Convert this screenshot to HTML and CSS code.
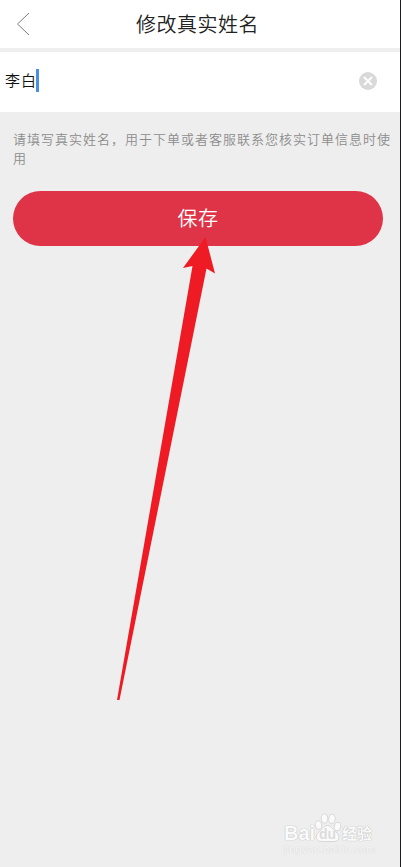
FILE: index.html
```
<!DOCTYPE html>
<html lang="zh-CN">
<head>
  <meta charset="UTF-8" />
  <meta name="viewport" content="width=device-width, initial-scale=1.0"/>
  <title>修改真实姓名</title>
  <link rel="stylesheet" href="styles.css">
</head>
<body>
  <div class="page">
    <header class="header">
      <a href="#" class="back" aria-label="返回">
        <svg width="14" height="24" viewBox="0 0 14 24">
          <path d="M13 1 L1.5 12 L13 23" fill="none" stroke="#7d7d7d" stroke-width="1"/>
        </svg>
      </a>
      <h1 class="title">修改真实姓名</h1>
    </header>

    <div class="field">
      <span class="name">李白</span>
      <span class="caret"></span>
      <svg class="clear" width="18" height="18" viewBox="0 0 18 18">
        <circle cx="9" cy="9" r="9" fill="#d9d9d9"/>
        <path d="M5 5 L13 13 M13 5 L5 13" stroke="#fff" stroke-width="2"/>
      </svg>
    </div>

    <p class="hint">请填写真实姓名，用于下单或者客服联系您核实订单信息时使用</p>

    <button class="save">保存</button>
  </div>

  <!-- Pointer arrow over the button -->
  <svg class="arrow" width="98" height="464" viewBox="0 0 98 464">
    <path d="M88.5 0 L98 36.5 L89.5 31.5 L2.5 463 L0 463 L75.5 29 L66 31 Z" fill="#ef1b24"/>
  </svg>

  <!-- Watermark -->
  <div class="watermark">
    <div class="wm-row">
      <span class="wm-bai">Bai</span>
      <span class="wm-paw">
        <svg width="28" height="30" viewBox="0 0 28 30">
          <g fill="#fafafa" stroke="#d8d8d8" stroke-width="1">
            <ellipse cx="4.5" cy="12" rx="3.2" ry="4.3" transform="rotate(-12 4.5 12)"/>
            <ellipse cx="10.5" cy="5.5" rx="3.2" ry="4.6"/>
            <ellipse cx="18" cy="5.8" rx="3.2" ry="4.6" transform="rotate(8 18 5.8)"/>
            <ellipse cx="23.5" cy="13.5" rx="3.2" ry="4.3" transform="rotate(12 23.5 13.5)"/>
            <path d="M13.5 12.5 C9.5 12.5 9 16 5.5 18.5 C-0.5 23 2.5 29 8 28.5 L20 28.5 C26 28.5 26.5 22.5 21.5 18.5 C18 16 17.5 12.5 13.5 12.5 Z"/>
          </g>
        </svg>
        <span class="wm-du">du</span>
      </span>
      <span class="wm-cn">经验</span>
    </div>
    <div class="wm-url">jingyan.baidu.com</div>
  </div>
</body>
</html>
```

FILE: styles.css
```
* {
  box-sizing: border-box;
}

body {
  margin: 0;
  background: #eee;
  font-family: "Noto Sans CJK SC", sans-serif;
  font-weight: 350;
  overflow: hidden;
}

.page {
  height: 867px;
  border-right: 1px solid #1c1c1e;
}

.header {
  display: flex;
  align-items: center;
  height: 48px;
  padding-left: 16px;
  background: #fff;
}

.back {
  display: flex;
  width: 14px;
}

.title {
  flex: 1;
  margin: 0 35px 0 0;
  font-size: 20px;
  font-weight: 350;
  line-height: 48px;
  letter-spacing: 0.5px;
  text-align: center;
  color: #222;
}

.field {
  display: flex;
  align-items: center;
  height: 64px;
  padding: 0 23px 3px 5px;
  border-top: 4px solid #eee;
  background: #fff;
}

.name {
  padding-bottom: 2px;
  font-size: 15px;
  letter-spacing: 1px;
  color: #111;
}

.caret {
  width: 3px;
  height: 23px;
  margin-left: -1px;
  background: #4a90e2;
}

.clear {
  margin-left: auto;
}

.hint {
  margin: 17px 0 0 13px;
  width: 380px;
  font-size: 13px;
  line-height: 19px;
  letter-spacing: 1px;
  color: #8c8c8c;
}

.save {
  display: block;
  width: 370px;
  height: 55px;
  margin: 24px 0 0 13px;
  padding: 0 0 2px;
  border: 0;
  border-radius: 28px;
  background: #df3447;
  font-family: inherit;
  font-size: 20px;
  font-weight: 350;
  letter-spacing: 0.5px;
  color: #fff;
}

.arrow {
  position: absolute;
  top: 237px;
  left: 117px;
}

.watermark {
  position: absolute;
  top: 813px;
  left: 284px;
  width: 92px;
  color: #fafafa;
  text-shadow: 0 0 1px #bbb, 0 0 1px #bbb;
}

.wm-row {
  display: flex;
  align-items: flex-end;
  height: 30px;
}

.wm-bai {
  width: 30px;
  font: bold 20px/20px "Liberation Sans", sans-serif;
}

.wm-paw {
  position: relative;
  width: 28px;
  height: 30px;
}

.wm-du {
  position: absolute;
  left: 5px;
  bottom: 0;
  font: bold 14px/17px "Liberation Sans", sans-serif;
  color: #dcdcdc;
  text-shadow: none;
}

.wm-cn {
  font-size: 15px;
  font-weight: 700;
  line-height: 20px;
}

.wm-url {
  font: 11px/12px "Liberation Sans", sans-serif;
  letter-spacing: 0.15px;
  color: #f8f8f8;
  text-shadow: 0 0 1px #c4c4c4;
}
```
